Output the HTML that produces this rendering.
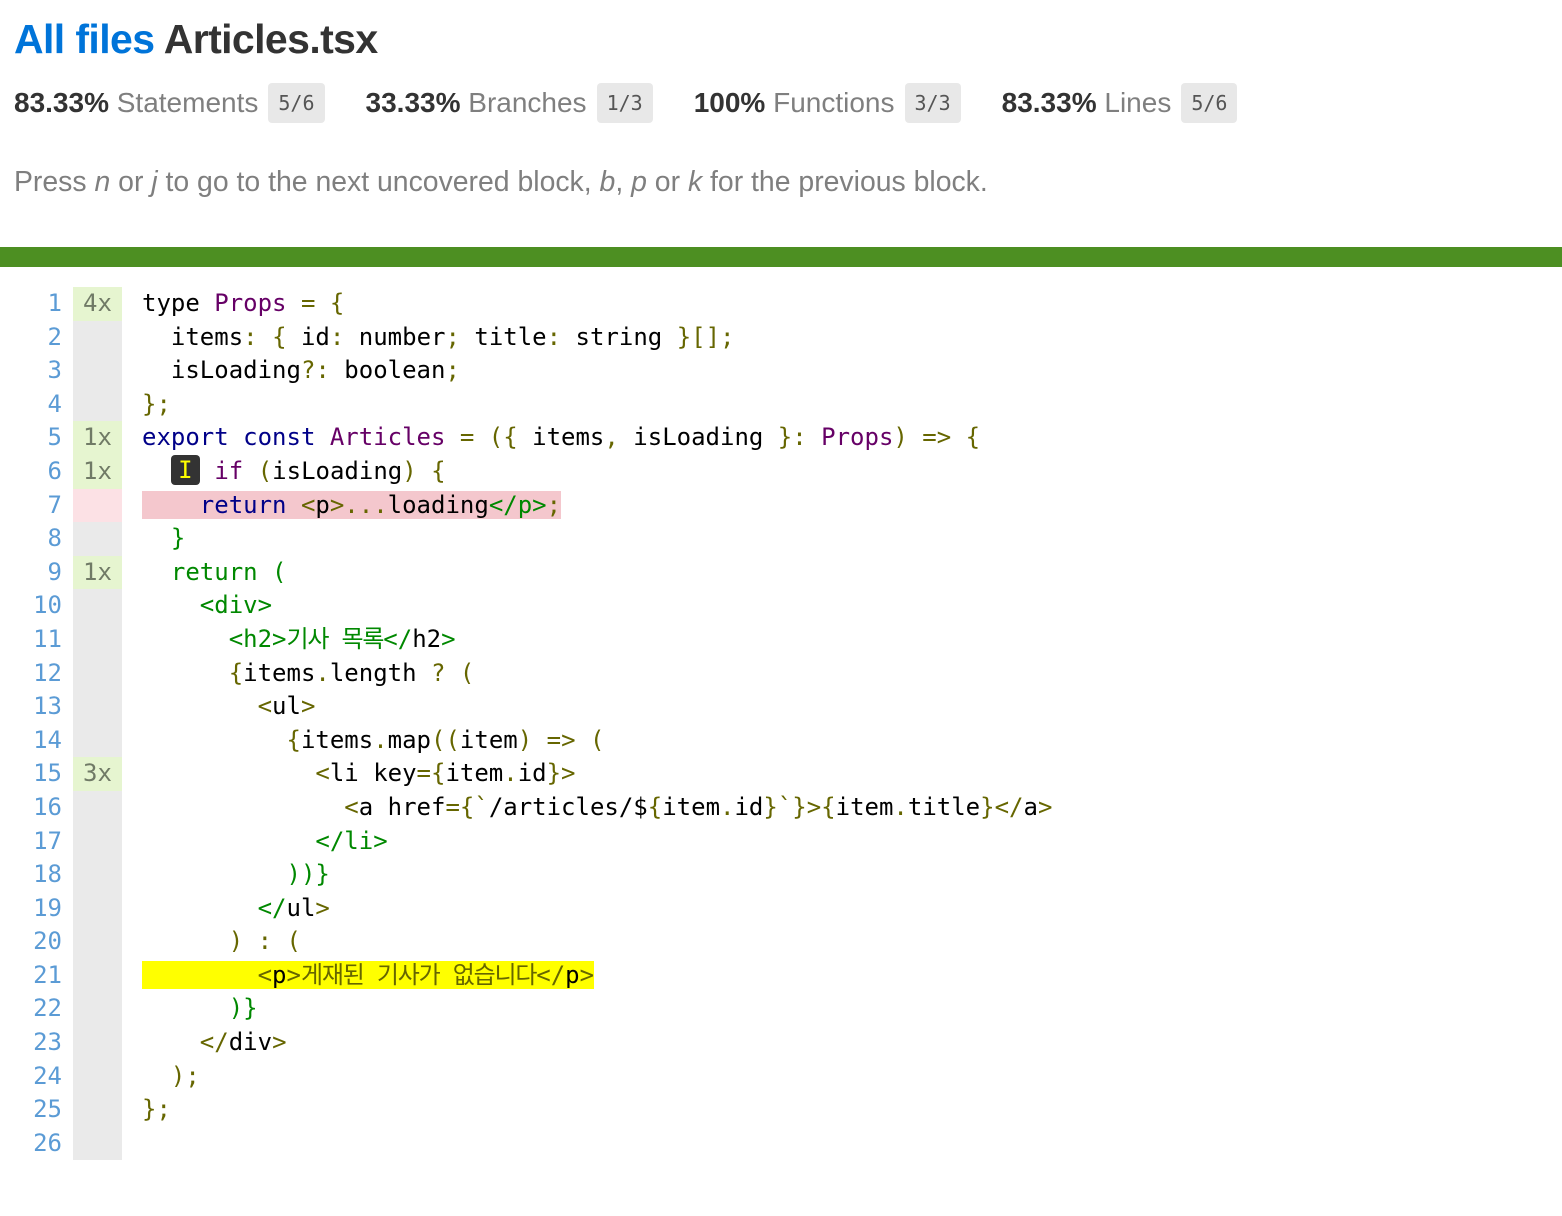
<!DOCTYPE html>
<html><head><meta charset="utf-8"><style>
body{margin:0;background:#fff;font-family:"Liberation Sans","Noto Sans CJK KR",sans-serif;color:#333;width:1562px;height:1216px;overflow:hidden;position:relative}
h1{position:absolute;left:14px;top:15px;margin:0;font-size:41px;font-weight:bold;letter-spacing:-0.6px;color:#333;line-height:48px}
h1 a{color:#0074D9;text-decoration:none}
.stats{position:absolute;left:14px;top:83px;font-size:28px;line-height:40px;white-space:nowrap}
.stats b{color:#333}
.stats .q{color:#7f7f7f}
.badge{display:inline-block;background:#e8e8e8;border-radius:4px;font-family:"DejaVu Sans Mono",monospace;font-size:20px;color:#555;padding:0 10px;line-height:40px;vertical-align:top;margin-left:10px}
.grp{display:inline-block;margin-right:41px}
.help{position:absolute;left:14px;top:166px;font-size:28.4px;color:#7f7f7f}
.bar{position:absolute;left:0;top:247px;width:1562px;height:20px;background:#4d8f22}
.code{position:absolute;top:287px;left:0;font-family:"DejaVu Sans Mono","Noto Sans CJK KR",monospace;font-size:24px}
.row{height:33.6px;line-height:33.6px;position:relative;white-space:pre}
.ln{position:absolute;left:0;width:62px;text-align:right;color:#5b9bd5}
.ct{position:absolute;left:73px;width:49px;height:33.6px;background:#eaeaea;color:#707a66;text-align:center}
.ct.y{background:#e6f5d0}.ct.n{background:#fce1e5}
.src{position:absolute;left:142px;color:#000}
.k{color:#000088}.t{color:#660066}.p{color:#666600}.g{color:#008800}
.hl{background:#f4c7cd}.yl{background:#ffff00}
.ko{letter-spacing:-1.2px}
.mk{display:inline-block;background:#333;color:#ff0;border-radius:4px;width:29px;height:30px;line-height:30px;text-align:center;vertical-align:middle;margin-top:-4px}
</style></head><body>
<h1><a>All files</a> Articles.tsx</h1>
<div class="stats"><span class="grp"><b>83.33%</b> <span class="q">Statements</span><span class="badge">5/6</span></span><span class="grp"><b>33.33%</b> <span class="q">Branches</span><span class="badge">1/3</span></span><span class="grp"><b>100%</b> <span class="q">Functions</span><span class="badge">3/3</span></span><span class="grp"><b>83.33%</b> <span class="q">Lines</span><span class="badge">5/6</span></span></div>
<div class="help">Press <i>n</i> or <i>j</i> to go to the next uncovered block, <i>b</i>, <i>p</i> or <i>k</i> for the previous block.</div>
<div class="bar"></div>
<div class="code">
<div class="row"><span class="ln">1</span><span class="ct y">4x</span><span class="src">type <span class="t">Props</span> <span class="p">= {</span></span></div>
<div class="row"><span class="ln">2</span><span class="ct"></span><span class="src">  items<span class="p">:</span> <span class="p">{</span> id<span class="p">:</span> number<span class="p">;</span> title<span class="p">:</span> string <span class="p">}[];</span></span></div>
<div class="row"><span class="ln">3</span><span class="ct"></span><span class="src">  isLoading<span class="p">?:</span> boolean<span class="p">;</span></span></div>
<div class="row"><span class="ln">4</span><span class="ct"></span><span class="src"><span class="p">};</span></span></div>
<div class="row"><span class="ln">5</span><span class="ct y">1x</span><span class="src"><span class="k">export const</span> <span class="t">Articles</span> <span class="p">= ({</span> items<span class="p">,</span> isLoading <span class="p">}:</span> <span class="t">Props</span><span class="p">) =&gt; {</span></span></div>
<div class="row"><span class="ln">6</span><span class="ct y">1x</span><span class="src">  <span class="mk">I</span> <span class="t">if</span> <span class="p">(</span>isLoading<span class="p">)</span> <span class="p">{</span></span></div>
<div class="row"><span class="ln">7</span><span class="ct n"></span><span class="src"><span class="hl">    <span class="k">return</span> <span class="p">&lt;</span>p<span class="p">&gt;...</span>loading<span class="g">&lt;/p&gt;</span><span class="p">;</span></span></span></div>
<div class="row"><span class="ln">8</span><span class="ct"></span><span class="src">  <span class="g">}</span></span></div>
<div class="row"><span class="ln">9</span><span class="ct y">1x</span><span class="src">  <span class="g">return (</span></span></div>
<div class="row"><span class="ln">10</span><span class="ct"></span><span class="src">    <span class="g">&lt;div&gt;</span></span></div>
<div class="row"><span class="ln">11</span><span class="ct"></span><span class="src">      <span class="g">&lt;h2&gt;<span class="ko">기사 목록</span>&lt;/</span>h2<span class="g">&gt;</span></span></div>
<div class="row"><span class="ln">12</span><span class="ct"></span><span class="src">      <span class="p">{</span>items<span class="p">.</span>length <span class="p">? (</span></span></div>
<div class="row"><span class="ln">13</span><span class="ct"></span><span class="src">        <span class="p">&lt;</span>ul<span class="p">&gt;</span></span></div>
<div class="row"><span class="ln">14</span><span class="ct"></span><span class="src">          <span class="p">{</span>items<span class="p">.</span>map<span class="p">((</span>item<span class="p">) =&gt; (</span></span></div>
<div class="row"><span class="ln">15</span><span class="ct y">3x</span><span class="src">            <span class="p">&lt;</span>li key<span class="p">={</span>item<span class="p">.</span>id<span class="p">}&gt;</span></span></div>
<div class="row"><span class="ln">16</span><span class="ct"></span><span class="src">              <span class="p">&lt;</span>a href<span class="p">={`</span>/articles/$<span class="p">{</span>item<span class="p">.</span>id<span class="p">}`}&gt;{</span>item<span class="p">.</span>title<span class="p">}&lt;/</span>a<span class="p">&gt;</span></span></div>
<div class="row"><span class="ln">17</span><span class="ct"></span><span class="src">            <span class="g">&lt;/li&gt;</span></span></div>
<div class="row"><span class="ln">18</span><span class="ct"></span><span class="src">          <span class="g">))}</span></span></div>
<div class="row"><span class="ln">19</span><span class="ct"></span><span class="src">        <span class="g">&lt;/</span>ul<span class="p">&gt;</span></span></div>
<div class="row"><span class="ln">20</span><span class="ct"></span><span class="src">      <span class="p">) : (</span></span></div>
<div class="row"><span class="ln">21</span><span class="ct"></span><span class="src"><span class="yl">        <span class="p">&lt;</span>p<span class="p">&gt;<span class="ko">게재된 기사가 없습니다</span>&lt;/</span>p<span class="p">&gt;</span></span></span></div>
<div class="row"><span class="ln">22</span><span class="ct"></span><span class="src">      <span class="g">)}</span></span></div>
<div class="row"><span class="ln">23</span><span class="ct"></span><span class="src">    <span class="p">&lt;/</span>div<span class="p">&gt;</span></span></div>
<div class="row"><span class="ln">24</span><span class="ct"></span><span class="src">  <span class="p">);</span></span></div>
<div class="row"><span class="ln">25</span><span class="ct"></span><span class="src"><span class="p">};</span></span></div>
<div class="row"><span class="ln">26</span><span class="ct"></span><span class="src"></span></div>
</div>
</body></html>
